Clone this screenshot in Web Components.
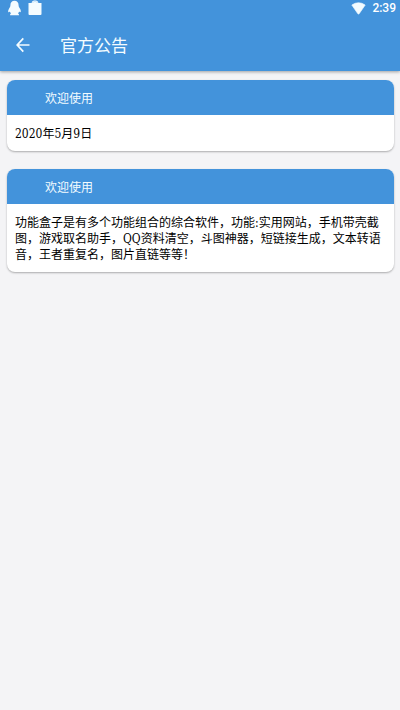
<!DOCTYPE html>
<html lang="zh-CN">
<head>
<meta charset="utf-8">
<meta name="viewport" content="width=device-width, initial-scale=1">
<title>官方公告</title>
<style>
  html { --brand: #4393db; background: #f4f4f6; }
  body { margin: 0; font: 12px/16px "DejaVu Serif Condensed", "Noto Sans CJK SC", serif; color: #000; }
</style>
</head>
<body>
<notice-page>
  <status-bar slot="top" time="2:39"></status-bar>
  <app-bar slot="top">官方公告</app-bar>
  <notice-card><span slot="title">欢迎使用</span>2020年5月9日</notice-card>
  <notice-card><span slot="title">欢迎使用</span>功能盒子是有多个功能组合的综合软件，功能:实用网站，手机带壳截图，游戏取名助手，QQ资料清空，斗图神器，短链接生成，文本转语音，王者重复名，图片直链等等！</notice-card>
</notice-page>
<script>
  const define = (name, html, setup) => {
    customElements.define(name, class extends HTMLElement {
      constructor() {
        super();
        this.attachShadow({ mode: 'open' }).innerHTML = html;
      }
      connectedCallback() { if (setup) setup(this); }
    });
  };

  define('notice-page', `
    <style>
      :host { display: block; }
      header { background: var(--brand); color: #fff; box-shadow: 0 1px 3px rgba(0,0,0,.35); }
      main { display: flex; flex-direction: column; gap: 18px; padding: 9px 6px 9px 7px; }
    </style>
    <header><slot name="top"></slot></header>
    <main><slot></slot></main>`);

  define('status-bar', `
    <style>
      :host { display: flex; align-items: center; height: 16px; padding: 0 4px 0 7px; gap: 6px;
              font: 500 12px/16px Roboto, sans-serif; }
      svg { display: block; fill: #f4fcff; }
      .wifi { margin-left: auto; }
    </style>
    <svg width="15" height="16" viewBox="0 0 15 16" aria-hidden="true"><path d="M7.500 .8C5 .8 3.400 2.600 3.400 5.200C3.400 6.600 2.800 7.400 2.100 8.500C1.200 10 .9 11.700 1.400 12.200C1.800 12.500 2.400 12 2.900 11.500C3.100 12.300 3.500 12.900 4 13.400C3.200 13.700 3 14.200 3.100 15.200H12C12.100 14.200 11.800 13.700 11 13.400C11.500 12.800 11.900 12.300 12.100 11.500C12.600 12 13.200 12.400 13.600 12.100C14.100 11.600 13.800 10 12.900 8.500C12.200 7.400 11.600 6.600 11.600 5.200C11.600 2.600 10 .8 7.500 .8Z"/></svg>
    <svg width="14" height="16" viewBox="0 0 14 16" aria-hidden="true"><path d="M.5 3H3.500Q4 .5 6 .5H8Q10 .5 10.500 3H13.500V14Q13.500 15 12.500 15H1.500Q.5 15 .5 14Z"/><path d="M4.500 3Q5 1.500 7 1.500T9.500 3" fill="none" stroke="#b5daf6" stroke-width=".7"/></svg>
    <svg class="wifi" width="15" height="14" viewBox="0 0 15 14" aria-hidden="true"><path d="M.8 4Q7.500-.6 14.200 4L8.200 12.700Q7.500 13.500 6.800 12.700Z" stroke="#f4fcff" stroke-width=".6" stroke-linejoin="round"/></svg>
    <time></time>`,
    el => { el.shadowRoot.querySelector('time').textContent = el.getAttribute('time'); });

  define('app-bar', `
    <style>
      :host { display: flex; align-items: center; gap: 22px; height: 55px; padding: 2px 8px 0; box-sizing: border-box;
              color: #f4fcff; }
      button { display: grid; place-items: center; width: 30px; height: 40px; padding: 0; border: 0;
               background: none; color: inherit; cursor: pointer; }
      h1 { margin: 0; font: 400 17px/24px "Noto Sans CJK SC", sans-serif; }
    </style>
    <button type="button" aria-label="返回"><svg width="14" height="16" viewBox="0 0 14 16" fill="none" stroke="currentColor" stroke-width="1.700" aria-hidden="true"><path d="M13.500 8H1.500M7.300 1.400L1.200 8L7.300 14.600"/></svg></button>
    <h1><slot></slot></h1>`);

  define('notice-card', `
    <style>
      :host { display: block; background: #fff; border-radius: 8px; overflow: hidden;
              box-shadow: 0 1px 2px rgba(0,0,0,.3); }
      h2 { margin: 0; padding: 10px 38px 9px; background: var(--brand); color: #f4fcff;
           font: 400 12px/16px "Noto Sans CJK SC", sans-serif; }
      p { margin: 0; padding: 11px 8px 9px; }
    </style>
    <h2><slot name="title"></slot></h2>
    <p><slot></slot></p>`);
</script>
</body>
</html>
